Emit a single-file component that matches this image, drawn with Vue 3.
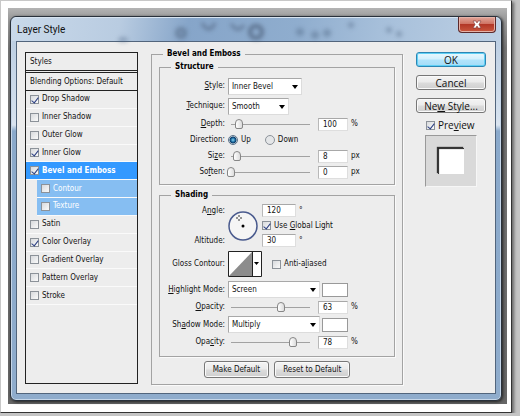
<script setup>
import { reactive, ref } from 'vue'

const effects = reactive([
  { id: 'drop', name: 'Drop Shadow', on: true },
  { id: 'inner-shadow', name: 'Inner Shadow', on: false },
  { id: 'outer-glow', name: 'Outer Glow', on: false },
  { id: 'inner-glow', name: 'Inner Glow', on: true },
  { id: 'bevel', name: 'Bevel and Emboss', on: true, active: true },
  { id: 'contour', name: 'Contour', on: false, sub: true },
  { id: 'texture', name: 'Texture', on: false, sub: true },
  { id: 'satin', name: 'Satin', on: false },
  { id: 'color', name: 'Color Overlay', on: true },
  { id: 'gradient', name: 'Gradient Overlay', on: false },
  { id: 'pattern', name: 'Pattern Overlay', on: false },
  { id: 'stroke', name: 'Stroke', on: false }
])

const bevel = reactive({
  style: 'Inner Bevel',
  technique: 'Smooth',
  depth: 100,
  direction: 'up',
  size: 8,
  soften: 0,
  angle: 120,
  altitude: 30,
  globalLight: true,
  antiAliased: false,
  highlight: 'Screen',
  highlightOpacity: 63,
  shadow: 'Multiply',
  shadowOpacity: 78
})
const preview = ref(true)
</script>

<template>
  <div class="page">
    <div class="backdrop">
      <div class="window">
        <header class="titlebar">
          <svg class="blobs" width="400" height="24" viewBox="0 0 400 24" aria-hidden="true">
            <g fill="none" stroke="#3f5069">
              <circle cx="169" cy="15" r="4" stroke-width="4" opacity=".45" />
              <path d="M190 5q7 12 13 0M219 6q7 10 13 1" stroke-width="3" opacity=".5" />
              <circle cx="244" cy="14" r="6" stroke-width="4" opacity=".6" />
            </g>
            <g fill="#4b617f" opacity=".4">
              <circle cx="288" cy="14" r="4" />
              <circle cx="303" cy="17" r="4" />
              <circle cx="315" cy="15" r="4" />
              <circle cx="339" cy="7" r="3" />
              <circle cx="377" cy="12" r="3" />
              <circle cx="387" cy="16" r="3" />
              <ellipse cx="111" cy="22" rx="5" ry="3" />
            </g>
          </svg>
          <h1>Layer Style</h1>
          <button class="close" type="button" aria-label="Close">
            <svg width="10" height="9" viewBox="0 0 10 9">
              <path d="M1 1h3l1 2 1-2h3L7 4.500l2 3.500H6L5 6 4 8H1l2-3.500z" fill="#fff" stroke="#7c3433" stroke-width=".6" />
            </svg>
          </button>
        </header>

        <main class="content">
          <nav class="styles">
            <div class="styles-head">Styles</div>
            <div class="styles-head blending">Blending Options: Default</div>
            <ul>
              <li v-for="e in effects" :key="e.id" :class="{ active: e.active, sub: e.sub }">
                <label><input v-model="e.on" type="checkbox">{{ e.name }}</label>
              </li>
            </ul>
          </nav>

          <fieldset class="panel">
            <legend>Bevel and Emboss</legend>

            <fieldset class="group structure">
              <legend>Structure</legend>
              <div class="row tall">
                <label class="name" for="style"><u>S</u>tyle:</label>
                <span class="select w-style">
                  <select id="style" v-model="bevel.style"><option>Inner Bevel</option></select>
                </span>
              </div>
              <div class="row tall">
                <label class="name" for="technique"><u>T</u>echnique:</label>
                <span class="select w-tech">
                  <select id="technique" v-model="bevel.technique"><option>Smooth</option></select>
                </span>
              </div>
              <div class="row">
                <label class="name" for="depth"><u>D</u>epth:</label>
                <input v-model.number="bevel.depth" type="range" max="1000" aria-label="Depth slider">
                <input id="depth" v-model="bevel.depth" class="num" type="text"><span class="unit">%</span>
              </div>
              <div class="row">
                <span class="name">Direction:</span>
                <label class="radio"><input v-model="bevel.direction" type="radio" name="dir" value="up">Up</label>
                <label class="radio"><input v-model="bevel.direction" type="radio" name="dir" value="down">Down</label>
              </div>
              <div class="row">
                <label class="name" for="size">Si<u>z</u>e:</label>
                <input v-model.number="bevel.size" type="range" max="100" aria-label="Size slider">
                <input id="size" v-model="bevel.size" class="num" type="text"><span class="unit">px</span>
              </div>
              <div class="row">
                <label class="name" for="soften">So<u>f</u>ten:</label>
                <input v-model.number="bevel.soften" type="range" max="16" aria-label="Soften slider">
                <input id="soften" v-model="bevel.soften" class="num" type="text"><span class="unit">px</span>
              </div>
            </fieldset>

            <fieldset class="group shading">
              <legend>Shading</legend>
              <div class="light">
                <label class="name" for="angle">A<u>n</u>gle:</label>
                <svg class="dial" width="30" height="30" viewBox="0 0 30 30" aria-hidden="true">
                  <circle cx="15" cy="15" r="14" fill="#f5f5f5" stroke="#4a5b8e" stroke-width="1.500" />
                  <circle cx="15" cy="15" r="1.500" fill="#000" />
                  <path d="M11 4v2M11 8v2M8 7h2M12 7h2" stroke="#333" />
                </svg>
                <div class="cell"><input id="angle" v-model="bevel.angle" class="num wide" type="text"><span class="unit">°</span></div>
                <label class="cell check"><input v-model="bevel.globalLight" type="checkbox"><span>Use <u>G</u>lobal Light</span></label>
                <label class="name altitude" for="altitude">Altitude:</label>
                <div class="cell"><input id="altitude" v-model="bevel.altitude" class="num wide" type="text"><span class="unit">°</span></div>
              </div>
              <div class="row gloss">
                <span class="name">Gloss Contour:</span>
                <button class="contour" type="button" aria-label="Gloss Contour">
                  <svg width="34" height="26" viewBox="0 0 34 26">
                    <path d="M0 0h34v26H0z" fill="#fff" />
                    <path d="M1 25L24 1v24z" fill="#8c8c8c" />
                    <path d="M24.500 0v26" stroke="#222" />
                    <path d="M26 11h5l-2.500 3z" fill="#000" />
                    <path d="M.5.5h33v25H.5z" fill="none" stroke="#222" />
                  </svg>
                </button>
                <label class="check anti"><input v-model="bevel.antiAliased" type="checkbox"><span>Anti-a<u>l</u>iased</span></label>
              </div>
              <div class="row blend">
                <label class="name" for="highlight"><u>H</u>ighlight Mode:</label>
                <span class="select w-mode">
                  <select id="highlight" v-model="bevel.highlight"><option>Screen</option></select>
                </span>
                <button class="swatch" type="button" aria-label="Highlight color"></button>
              </div>
              <div class="row">
                <label class="name" for="hi-opacity"><u>O</u>pacity:</label>
                <input v-model.number="bevel.highlightOpacity" type="range" max="100" aria-label="Highlight opacity slider">
                <input id="hi-opacity" v-model="bevel.highlightOpacity" class="num" type="text"><span class="unit">%</span>
              </div>
              <div class="row blend">
                <label class="name" for="shadow">Sh<u>a</u>dow Mode:</label>
                <span class="select w-mode">
                  <select id="shadow" v-model="bevel.shadow"><option>Multiply</option></select>
                </span>
                <button class="swatch" type="button" aria-label="Shadow color"></button>
              </div>
              <div class="row">
                <label class="name" for="sh-opacity">Opa<u>c</u>ity:</label>
                <input v-model.number="bevel.shadowOpacity" type="range" max="100" aria-label="Shadow opacity slider">
                <input id="sh-opacity" v-model="bevel.shadowOpacity" class="num" type="text"><span class="unit">%</span>
              </div>
            </fieldset>

            <div class="defaults">
              <button class="btn small" type="button">Make Default</button>
              <button class="btn small" type="button">Reset to Default</button>
            </div>
          </fieldset>

          <aside class="actions">
            <button class="btn ok" type="button">OK</button>
            <button class="btn" type="button">Cancel</button>
            <button class="btn" type="button">Ne<u>w</u> Style...</button>
            <label class="check preview"><input v-model="preview" type="checkbox"><span>Pre<u>v</u>iew</span></label>
            <div class="thumb"><div class="thumb-square"></div></div>
          </aside>
        </main>
      </div>
    </div>
  </div>
</template>

<style>
body { margin: 0; background: #c4c4c4; }
</style>

<style scoped>
* { box-sizing: border-box; }
.page {
  min-height: calc(100vh - 4px);
  margin-right: 8px;
  padding: 7px 4px 8px 7px;
  display: flex;
  background: #fff;
  border: 1px solid #c8c8c8;
  border-right-color: #333;
  border-bottom-color: #333;
  box-shadow: 2px 2px 3px #666;
  font-family: "DejaVu Sans Condensed", "DejaVu Sans", sans-serif;
  font-stretch: condensed;
  font-size: 8px;
  line-height: 12px;
  color: #111;
}
.backdrop {
  flex: 1;
  display: flex;
  padding: 8px 5px 3px 2px;
  background: linear-gradient(#b4b4b4, #a0a0a0 8px, #777 40px, #666);
}
.window {
  flex: 1;
  display: flex;
  flex-direction: column;
  padding: 0 5px 6px;
  border: 1px solid #29313b;
  border-radius: 6px;
  background: linear-gradient(#b5c9df, #d5e1ee 100px, #dbe5f0 108px, #8aa9cb 114px, #8faccc);
  box-shadow: inset 0 0 0 1px #c6d6e8, 1px 1px 3px #222;
}
.titlebar {
  position: relative;
  height: 24px;
  margin: 0 -4px;
  display: flex;
  justify-content: space-between;
  background: linear-gradient(100deg, #c9d9ea, #b9cce1 22%, #86a5c9 36%, #8fadce 58%, #a6bfda 75%, #bdd0e4);
  border-radius: 5px 5px 0 0;
  border-top: 1px solid #d8e4f0;
}
.blobs { position: absolute; top: 0; left: 0; filter: blur(2px); }
h1 {
  position: relative;
  margin: 4px 0 0 5px;
  font: 10px/16px Roboto, sans-serif;
}
.close {
  position: relative;
  width: 38px;
  height: 16px;
  margin: -1px 4px 0 0;
  padding: 0;
  display: flex;
  align-items: center;
  justify-content: center;
  background: linear-gradient(#e2a79a, #cf7465 45%, #b23727 50%, #c9583f);
  border: 1px solid #5c2a2c;
  border-top: 0;
  border-radius: 0 0 4px 4px;
  box-shadow: inset 0 0 0 1px #e6b3a8;
}
.content {
  flex: 1;
  display: flex;
  align-items: stretch;
  padding: 8px 9px 8px 8px;
  background: #ededed;
  border: 1px solid #52657c;
}

/* effect list */
.styles {
  width: 113px;
  margin: 2px 13px 1px 0;
  border: 1px solid #222;
}
.styles-head {
  height: 18px;
  padding-left: 4px;
  line-height: 17px;
  border-bottom: 1px solid #222;
}
.blending { height: 19px; margin-top: 1px; border-top: 1px solid #222; }
ul {
  height: 214px;
  margin: 0;
  padding: 0;
  list-style: none;
  display: grid;
  grid-auto-rows: 1fr;
}
li { border-bottom: 1px solid #fafafa; }
li label { display: flex; align-items: center; gap: 3px; height: 100%; padding-left: 4px; }
li.active { background: #3399ff; color: #fff; font-weight: bold; }
li.sub { margin-left: 11px; background: #86bef2; color: #fff; }

input { margin: 0; font: inherit; color: inherit; }
button, select { font: inherit; color: inherit; }
input[type="checkbox"] {
  appearance: none;
  flex: none;
  position: relative;
  width: 9px;
  height: 9px;
  border: 1px solid #8c9299;
  background: linear-gradient(135deg, #d8dadd, #fafafa);
}
input[type="checkbox"]:checked::after {
  content: "";
  position: absolute;
  left: 2px;
  top: 0;
  width: 3px;
  height: 6px;
  border: solid #2b3f83;
  border-width: 0 1px 1px 0;
  transform: rotate(38deg);
}

/* settings */
fieldset {
  min-width: 0;
  margin: 0;
  padding: 0;
  border: 1px solid #a3a3a3;
  box-shadow: 1px 1px 0 #fafafa;
}
legend { padding: 0 4px; font-weight: bold; color: #000; }
.panel { flex: 1; padding: 0 7px; margin-top: -2px; }
.panel > legend { margin-left: 4px; }
.group legend { margin-left: 11px; }
.structure { margin-top: 1px; padding: 3px 0 4px; }
.shading { margin-top: 4px; padding: 2px 0 6px; }
.row { display: flex; align-items: center; height: 16px; }
.row.tall { height: 20px; }
.row.blend { height: 19px; }
.row.gloss { height: 32px; }
.name { flex: none; width: 65px; margin-right: 3px; text-align: right; white-space: nowrap; }
u { text-underline-offset: 1px; }
.select { position: relative; height: 17px; }
.select::after {
  content: "";
  position: absolute;
  right: 4px;
  top: 7px;
  border: solid transparent;
  border-width: 4px 3px 0;
  border-top-color: #000;
  pointer-events: none;
}
select {
  appearance: none;
  display: block;
  width: 100%;
  height: 17px;
  padding: 1px 12px 0 3px;
  background: #fff;
  border: 1px solid #dcdcdc;
  border-top-color: #a8a8a8;
  border-left-color: #a8a8a8;
  border-radius: 0;
}
.w-style { width: 74px; }
.w-tech { width: 61px; }
.w-mode { width: 92px; }

input[type="range"] {
  appearance: none;
  flex: none;
  width: 87px;
  height: 12px;
  margin: 0 4px 0 -1px;
  background: linear-gradient(#a2a2a2, #a2a2a2) center / 79px 1px no-repeat;
}
input[type="range"]::-webkit-slider-thumb {
  appearance: none;
  width: 8px;
  height: 10px;
  border: 1px solid #868686;
  border-radius: 4px 4px 2px 2px;
  background: linear-gradient(90deg, #fff, #dcdcdc);
}
.num {
  width: 30px;
  height: 13px;
  padding: 0 0 0 4px;
  background: #fff;
  border: 1px solid #dedede;
  border-top-color: #a8a8a8;
  border-left-color: #b8b8b8;
}
.num.wide { width: 34px; }
.unit { margin-left: 3px; }
.radio { display: flex; align-items: center; gap: 3px; margin-right: 14px; }
.radio input {
  appearance: none;
  width: 10px;
  height: 10px;
  border: 1px solid #8c9299;
  border-radius: 50%;
  background: #e4e6e8;
}
.radio input:checked {
  border-color: #5c7389;
  background: radial-gradient(circle at 4px 4px, #8fd6f2, #1c6ea3 2px, #0d3a66 3px, #e8eef2 4px);
}
.light {
  display: grid;
  grid-template-columns: 65px 30px 1fr;
  grid-template-rows: 15px 15px 15px;
  column-gap: 3px;
  align-items: center;
}
.light .name { margin: 0; }
.dial { grid-area: 1 / 2 / 4 / 3; }
.light .cell { grid-column: 3; display: flex; align-items: center; margin-left: 1px; }
.altitude { grid-area: 3 / 1; }
.check { display: flex; align-items: center; gap: 3px; white-space: nowrap; }
.contour { padding: 0; border: 0; background: none; display: flex; }
.anti { margin-left: 10px; }
.swatch {
  width: 26px;
  height: 14px;
  margin-left: 2px;
  padding: 0;
  background: #fff;
  border: 1px solid #999;
}
.defaults { display: flex; justify-content: center; gap: 5px; padding: 4px 0 6px; }

/* buttons */
.btn {
  height: 15px;
  padding: 0;
  font: 10px/12px "Open Sans", sans-serif;
  background: linear-gradient(#f4f4f4, #ebebeb 48%, #dcdcdc 52%, #cfcfcf);
  border: 1px solid #777;
  border-radius: 3px;
  box-shadow: inset 0 0 0 1px #fafafa;
}
.btn.small { height: 17px; padding: 0 8px; font: inherit; }
.btn.ok {
  background: linear-gradient(#e9f8fe, #d2f0fd 48%, #b2e4fb 52%, #a5dcf7);
  border-color: #2c86b4;
  box-shadow: inset 0 0 0 1px #5fd0f5;
}
.actions { width: 70px; margin: 2px 0 0 13px; display: flex; flex-direction: column; }
.actions .btn { margin-bottom: 8px; }
.preview { margin: -2px 0 0 10px; font: 10px/12px "Open Sans", sans-serif; }
.thumb {
  width: 52px;
  height: 52px;
  margin: 4px 0 0 9px;
  display: flex;
  align-items: center;
  justify-content: center;
  background: #d9d9d9;
  border: 1px solid #f6f6f6;
  border-top-color: #999;
  border-left-color: #999;
}
.thumb-square { width: 26px; height: 26px; background: #fff; box-shadow: inset 1px 1px 1px #222, -1px -1px 1px #333; }
</style>
